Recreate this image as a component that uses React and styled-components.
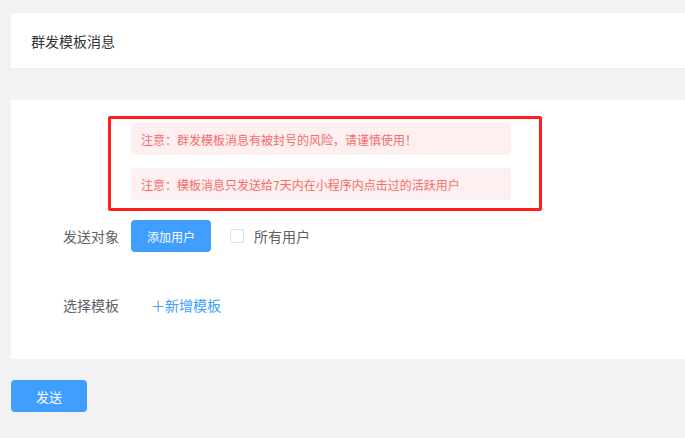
import styled, { createGlobalStyle } from "styled-components"

const Global = createGlobalStyle`
  body {
    margin: 0;
    background: #f2f2f2;
    font-family: "Noto Sans CJK SC", "Noto Sans", sans-serif;
  }
`

export default function App() {
  return (
    <>
      <Global />
      <Page>
        <Header>群发模板消息</Header>
        <Card>
          <Notice>
            <Alert>注意：群发模板消息有被封号的风险，请谨慎使用！</Alert>
            <Alert>注意：模板消息只发送给7天内在小程序内点击过的活跃用户</Alert>
          </Notice>
          <Row>
            <Label>发送对象</Label>
            <Button>添加用户</Button>
            <Check>
              <Box />
              所有用户
            </Check>
          </Row>
          <Row $top={37}>
            <Label>选择模板</Label>
            <TextButton>＋新增模板</TextButton>
          </Row>
        </Card>
        <Button $wide>发送</Button>
      </Page>
    </>
  )
}

const Page = styled.div`
  padding: 13px 0 0 11px;
  display: flex;
  flex-direction: column;
  align-items: flex-start;
`

const Header = styled.div`
  align-self: stretch;
  height: 55px;
  display: flex;
  align-items: center;
  padding-left: 20px;
  background: #fff;
  border-radius: 4px 0 0 0;
  border-bottom: 1px solid #e9edf3;
  font-size: 14px;
  color: #333;
`

const Card = styled.div`
  align-self: stretch;
  margin-top: 31px;
  background: #fff;
  padding: 16px 0 38px 52px;
  margin-bottom: 21px;
`

const Notice = styled.div`
  width: 380px;
  margin-left: 45px;
  border: 3px solid #ff1f1f;
  border-radius: 2px;
  padding: 4px 28px 8px 20px;
  display: flex;
  flex-direction: column;
  gap: 13px;
`

const Alert = styled.div`
  height: 32px;
  display: flex;
  align-items: center;
  padding-left: 10px;
  background: #fef0f0;
  border-radius: 4px;
  font-size: 12px;
  color: #f56c6c;
`

const Row = styled.div`
  display: flex;
  align-items: center;
  height: 32px;
  margin-top: ${(p) => p.$top || 9}px;
`

const Label = styled.div`
  width: 68px;
  font-size: 14px;
  color: #606266;
`

const Button = styled.button`
  border: none;
  width: ${(p) => (p.$wide ? 76 : 80)}px;
  height: 32px;
  padding: 0;
  background: #409eff;
  border-radius: 4px;
  color: #fff;
  font-family: inherit;
  font-size: ${(p) => (p.$wide ? 13 : 12)}px;
`

const Check = styled.label`
  display: flex;
  align-items: center;
  gap: 10px;
  margin-left: 19px;
  font-size: 14px;
  color: #606266;
`

const Box = styled.span`
  width: 12px;
  height: 12px;
  border: 1px solid #dcdfe6;
  border-radius: 2px;
  background: #fff;
`

const TextButton = styled.button`
  border: none;
  background: none;
  padding: 0;
  margin-left: 20px;
  color: #409eff;
  font-family: inherit;
  font-size: 14px;
`
